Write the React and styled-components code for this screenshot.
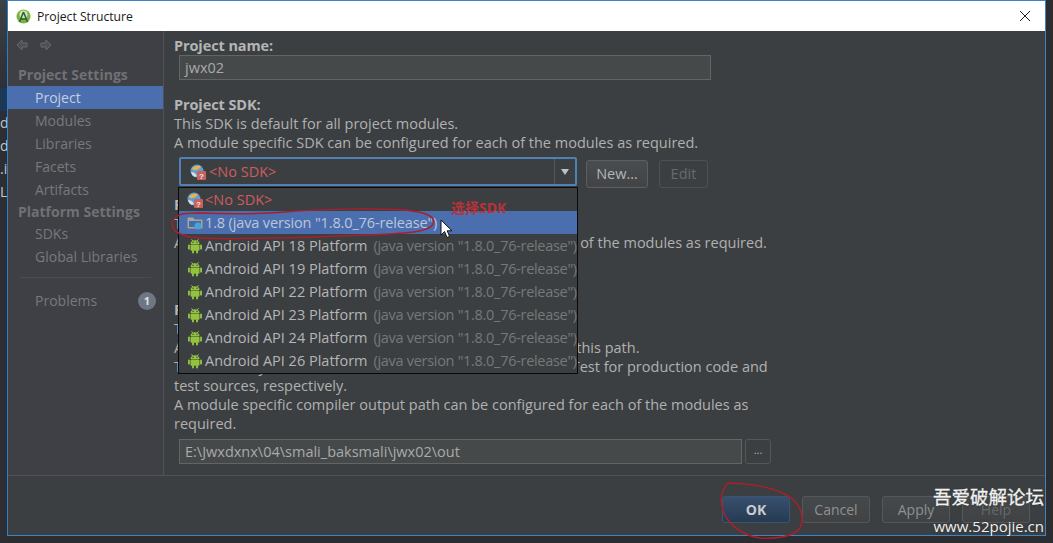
import React from 'react'
import styled, { createGlobalStyle } from 'styled-components'

const GlobalStyle = createGlobalStyle`
  html, body {
    margin: 0;
    padding: 0;
    background: #2b2d30;
  }
`

const Desktop = styled.div`
  position: relative;
  width: 1053px;
  height: 543px;
  overflow: hidden;
  display: flex;
  background: #2b2d30;
  font-family: "Open Sans", "Noto Sans CJK SC", sans-serif;
  font-size: 14px;
`
const BehindColumn = styled.div`
  width: 7px;
  flex: none;
  overflow: hidden;
  display: flex;
  flex-direction: column;
  background: #2c2e33;
`
const BehindTop = styled.div`
  height: 88px;
  flex: none;
  background: linear-gradient(#3c4148, #2d3036);
`
const BehindSelected = styled.div`
  height: 23px;
  flex: none;
  background: #1c3858;
`
const BehindRow = styled.div`
  height: 23px;
  flex: none;
  line-height: 23px;
  color: #c4c6c8;
  white-space: nowrap;
`
const Win = styled.div`
  width: 1039px;
  height: 536px;
  flex: none;
  box-sizing: border-box;
  border: 1px solid #3c85c4;
  border-left-color: #2f7fc1;
  display: flex;
  flex-direction: column;
  background: #3c3f41;
  color: #b0b1b2;
`
const TitleBar = styled.div`
  height: 30px;
  flex: none;
  display: flex;
  align-items: center;
  gap: 6px;
  padding: 0 14px 0 8px;
  background: #fff;
  color: #1a1a1a;
`
const TitleText = styled.span`
  flex: 1;
  font-size: 12.2px;
`
const CloseButton = styled.div`
  width: 12px;
  height: 12px;
  display: flex;
`
const Main = styled.div`
  flex: 1;
  display: flex;
  min-height: 0;
`
const Sidebar = styled.div`
  width: 156px;
  flex: none;
  box-sizing: border-box;
  border-right: 1px solid #505355;
  background: #3e4045;
  display: flex;
  flex-direction: column;
  color: #77797c;
`
const NavArrows = styled.div`
  height: 32px;
  padding: 0 0 4px 8px;
  box-sizing: border-box;
  display: flex;
  align-items: center;
  gap: 12px;
`
const GroupTitle = styled.div`
  height: ${p => p.$h || 23}px;
  line-height: ${p => p.$h || 23}px;
  padding-left: 10px;
  font-weight: 700;
  color: #6f7174;
`
const SideItem = styled.div`
  height: 23px;
  line-height: 23px;
  padding-left: 27px;
  display: flex;
  align-items: center;
  justify-content: space-between;
  color: ${p => (p.$active ? '#c5cede' : '#77797c')};
  background: ${p => (p.$active ? '#4b6eaf' : 'transparent')};
`
const SideDivider = styled.div`
  height: 1px;
  margin: 9px 12px 11px;
  background: #4a4c4f;
`
const Badge = styled.span`
  width: 18px;
  height: 18px;
  margin-right: 7px;
  border-radius: 50%;
  background: #6d7785;
  color: #dfe1e4;
  font-size: 11px;
  font-weight: 700;
  line-height: 18px;
  text-align: center;
`
const Content = styled.div`
  flex: 1;
  position: relative;
  padding: 5px 10px 0;
  display: flex;
  flex-direction: column;
  font-size: 14.5px;
`
const Label = styled.div`
  font-weight: 700;
  line-height: 19px;
  margin-top: ${p => p.$top || 0}px;
  color: #b4b5b6;
  letter-spacing: -0.1px;
`
const TextLine = styled.div`
  line-height: 19px;
  white-space: nowrap;
`
const FieldRow = styled.div`
  display: flex;
  gap: 3px;
  margin: ${p => p.$top || 0}px 0 0 5px;
`
const TextField = styled.div`
  width: ${p => p.$w}px;
  height: 25px;
  box-sizing: border-box;
  border: 1px solid #646464;
  background: #45494a;
  padding-left: 5px;
  line-height: 23px;
  color: #a9aaab;
`
const SmallButton = styled.div`
  width: 26px;
  height: 25px;
  box-sizing: border-box;
  border: 1px solid #555759;
  border-radius: 3px;
  text-align: center;
  line-height: 20px;
  font-size: 11px;
`
const ComboRow = styled.div`
  display: flex;
  align-items: flex-start;
  margin: 5px 0 0 5px;
`
const Combo = styled.div`
  width: 398px;
  height: 29px;
  box-sizing: border-box;
  border: 2px solid #4f81b5;
  border-radius: 2px;
  display: flex;
  align-items: center;
  background: #3c3f41;
  margin-right: 9px;
`
const ComboValue = styled.div`
  flex: 1;
  display: flex;
  align-items: center;
  gap: 3px;
  padding-left: 9px;
  color: #cf5b5f;
`
const ComboArrow = styled.div`
  width: 20px;
  height: 25px;
  border-left: 1px solid #55585a;
  display: flex;
  align-items: center;
  justify-content: center;
  &::after {
    content: '';
    border-left: 4px solid transparent;
    border-right: 4px solid transparent;
    border-top: 6px solid #bfc1c3;
  }
`
const PushButton = styled.div`
  width: ${p => p.$w}px;
  height: 28px;
  box-sizing: border-box;
  margin: 3px 0 0 ${p => p.$left || 0}px;
  border: 1px solid ${p => (p.$off ? '#4e5052' : '#5c5f61')};
  border-radius: 3px;
  background: ${p => (p.$off ? 'transparent' : 'linear-gradient(#4a4d4f, #414345)')};
  color: ${p => (p.$off ? '#686a6c' : '#b4b5b6')};
  line-height: 26px;
  text-align: center;
`
const Popup = styled.div`
  position: absolute;
  left: 14px;
  top: 156px;
  width: 400px;
  height: 187px;
  box-sizing: border-box;
  border: 1px solid #0a0a0a;
  background: #3c3f41;
  overflow: hidden;
`
const PopupRow = styled.div`
  height: 23px;
  display: flex;
  align-items: center;
  gap: 2px;
  padding-left: 8px;
  white-space: nowrap;
  color: #b4b5b6;
  background: ${p => (p.$selected ? '#4b6eaf' : 'transparent')};
`
const RedText = styled.span`
  color: #cf5b5f;
`
const PopupVersion = styled.span`
  color: #76787a;
  margin-left: 4px;
  letter-spacing: -0.3px;
`
const SelectedText = styled.span`
  color: #bcc6d8;
  letter-spacing: -0.14px;
`
const Footer = styled.div`
  height: 60px;
  flex: none;
  border-top: 1px solid #505355;
  display: flex;
  justify-content: flex-end;
  gap: 12px;
  padding: 20px 15px 0 0;
  box-sizing: border-box;
  background: #3c3f41;
`
const DialogButton = styled.div`
  width: 68px;
  height: 27px;
  box-sizing: border-box;
  border: 1px solid ${p => (p.$primary ? '#3a5570' : '#55585a')};
  border-radius: 3px;
  background: ${p => (p.$primary ? 'linear-gradient(#38506e, #263a52)' : 'linear-gradient(#46494b, #404244)')};
  color: ${p => (p.$primary ? '#c9ccd0' : p.$dim ? '#66686a' : '#8f9193')};
  font-weight: ${p => (p.$primary ? 700 : 400)};
  line-height: 25px;
  text-align: center;
`
const Scribbles = styled.svg`
  position: absolute;
  left: 0;
  top: 0;
  pointer-events: none;
`
const Callout = styled.div`
  position: absolute;
  left: 451px;
  top: 199px;
  color: #b8323a;
  font-size: 14px;
  font-weight: 700;
  line-height: 17px;
`
const Cursor = styled.svg`
  position: absolute;
  left: 440px;
  top: 219px;
`
const Watermark = styled.div`
  position: absolute;
  right: 9px;
  bottom: 6px;
  color: #f1f1f1;
  text-align: right;
  text-shadow: 0 0 2px #2a2a2a;
`
const WatermarkTitle = styled.div`
  font-size: 18.5px;
  line-height: 24px;
  margin-bottom: 6px;
  -webkit-text-stroke: 0.3px #f1f1f1;
`
const WatermarkUrl = styled.div`
  font-size: 15px;
  line-height: 22px;
`

const StudioIcon = () => (
  <svg width="15" height="15" viewBox="0 0 15 15">
    <circle cx="7.5" cy="7.5" r="7" fill="#7cb342" />
    <circle cx="7.5" cy="5.5" r="4" fill="#d3e6b5" />
    <path d="M7.5 3 L3.5 13 M7.5 3 L11.5 13 M4.5 10 H10.5" stroke="#2f5d3a" strokeWidth="1.5" fill="none" />
  </svg>
)

const CloseIcon = () => (
  <svg width="12" height="12" viewBox="0 0 12 12">
    <path d="M1 1 L11 11 M11 1 L1 11" stroke="#222" strokeWidth="1" />
  </svg>
)

const NavArrow = ({ flip }) => (
  <svg width="12" height="12" viewBox="0 0 12 12" style={flip ? { transform: 'scaleX(-1)' } : undefined}>
    <path d="M6 1 L1 6 L6 11 V8 H11 V4 H6 Z" fill="#4d5053" stroke="#66696c" strokeWidth="1" />
  </svg>
)

const NoSdkIcon = () => (
  <svg width="16" height="16" viewBox="0 0 16 16">
    <circle cx="7" cy="7" r="6.5" fill="#5f9fd6" />
    <path d="M2 4 Q6 1 11 2 Q9 6 5 6 Q3 7 2 4 Z" fill="#e6b450" />
    <path d="M1 8 Q5 8 7 12 L5 13 Q2 12 1 8 Z" fill="#d8dde2" />
    <rect x="7" y="7" width="9" height="9" rx="1" fill="#c7615a" />
    <text x="11.5" y="14.5" fontSize="8" fontWeight="700" fill="#f3e6e4" textAnchor="middle" fontFamily="Liberation Sans, sans-serif">?</text>
  </svg>
)

const FolderIcon = () => (
  <svg width="16" height="16" viewBox="0 0 16 16">
    <path d="M1 3 H6 L7.5 5 H15 V13 H1 Z" fill="#8fa8c8" stroke="#c7a15a" strokeWidth="1" />
    <rect x="2" y="6" width="12" height="6" fill="#3f6ea8" />
    <circle cx="11" cy="11" r="3.5" fill="#4aa3df" />
  </svg>
)

const AndroidIcon = () => (
  <svg width="16" height="16" viewBox="0 0 16 16">
    <path d="M4.5 1.2 L5.8 3 M11.5 1.2 L10.2 3" stroke="#93c23f" strokeWidth="1" />
    <path d="M3.5 6 Q3.7 2.3 8 2.3 Q12.3 2.3 12.5 6 Z" fill="#93c23f" />
    <circle cx="6" cy="4.3" r="0.7" fill="#3c3f41" />
    <circle cx="10" cy="4.3" r="0.7" fill="#3c3f41" />
    <rect x="3.5" y="6.6" width="9" height="6.2" rx="1" fill="#93c23f" />
    <rect x="1" y="6.6" width="1.9" height="5" rx="0.9" fill="#93c23f" />
    <rect x="13.1" y="6.6" width="1.9" height="5" rx="0.9" fill="#93c23f" />
    <rect x="5" y="12" width="2" height="3.4" rx="1" fill="#93c23f" />
    <rect x="9" y="12" width="2" height="3.4" rx="1" fill="#93c23f" />
  </svg>
)

const platforms = [18, 19, 22, 23, 24, 26]

const App = () => {
  return (
    <Desktop>
      <GlobalStyle />
      <BehindColumn>
        <BehindTop />
        <BehindSelected />
        <BehindRow>d</BehindRow>
        <BehindRow>de</BehindRow>
        <BehindRow>.i</BehindRow>
        <BehindRow>L</BehindRow>
      </BehindColumn>

      <Win>
        <TitleBar>
          <StudioIcon />
          <TitleText>Project Structure</TitleText>
          <CloseButton><CloseIcon /></CloseButton>
        </TitleBar>
        <Main>
          <Sidebar>
            <NavArrows>
              <NavArrow />
              <NavArrow flip />
            </NavArrows>
            <GroupTitle>Project Settings</GroupTitle>
            <SideItem $active>Project</SideItem>
            <SideItem>Modules</SideItem>
            <SideItem>Libraries</SideItem>
            <SideItem>Facets</SideItem>
            <SideItem>Artifacts</SideItem>
            <GroupTitle $h={21}>Platform Settings</GroupTitle>
            <SideItem>SDKs</SideItem>
            <SideItem>Global Libraries</SideItem>
            <SideDivider />
            <SideItem>Problems<Badge>1</Badge></SideItem>
          </Sidebar>
          <Content>
            <Label>Project name:</Label>
            <FieldRow><TextField $w={532}>jwx02</TextField></FieldRow>
            <Label $top={15}>Project SDK:</Label>
            <TextLine>This SDK is default for all project modules.</TextLine>
            <TextLine>A module specific SDK can be configured for each of the modules as required.</TextLine>
            <ComboRow>
              <Combo>
                <ComboValue><NoSdkIcon />&lt;No SDK&gt;</ComboValue>
                <ComboArrow />
              </Combo>
              <PushButton $w={62}>New...</PushButton>
              <PushButton $w={49} $left={11} $off>Edit</PushButton>
            </ComboRow>
            <Label $top={7}>Project language level:</Label>
            <TextLine>This language level is default for all project modules.</TextLine>
            <TextLine>A module specific language level can be configured for each of the modules as required.</TextLine>
            <Label $top={48}>Project compiler output:</Label>
            <TextLine>This path is used to store all project compilation results.</TextLine>
            <TextLine>A directory corresponding to each module is created under this path.</TextLine>
            <TextLine>This directory contains two subdirectories: Production and Test for production code and</TextLine>
            <TextLine>test sources, respectively.</TextLine>
            <TextLine>A module specific compiler output path can be configured for each of the modules as</TextLine>
            <TextLine>required.</TextLine>
            <FieldRow $top={6}>
              <TextField $w={563}>E:\Jwxdxnx\04\smali_baksmali\jwx02\out</TextField>
              <SmallButton>...</SmallButton>
            </FieldRow>

            <Popup>
              <PopupRow><NoSdkIcon /><RedText>&lt;No SDK&gt;</RedText></PopupRow>
              <PopupRow $selected><FolderIcon /><SelectedText>1.8 (java version "1.8.0_76-release")</SelectedText></PopupRow>
              {platforms.map(level => (
                <PopupRow key={level}>
                  <AndroidIcon />
                  Android API {level} Platform
                  <PopupVersion>(java version "1.8.0_76-release")</PopupVersion>
                </PopupRow>
              ))}
            </Popup>
          </Content>
        </Main>
        <Footer>
          <DialogButton $primary>OK</DialogButton>
          <DialogButton>Cancel</DialogButton>
          <DialogButton>Apply</DialogButton>
          <DialogButton $dim>Help</DialogButton>
        </Footer>
      </Win>

      <Scribbles width="1053" height="543" viewBox="0 0 1053 543" fill="none">
        <path d="M172 222 C176 214 182 213 200 213 C230 214 260 214 285 212 C320 209 370 208 405 210 C425 212 436 216 433 224 C430 232 410 233 370 235 C330 236 300 238 265 238 C235 239 205 239 190 237 C178 235 171 229 172 222 Z" stroke="#a8202c" strokeWidth="1.5" />
        <path d="M728 483 C745 483 772 486 790 497 C801 505 805 518 800 528 C794 537 775 539 760 538 C745 536 732 527 726 517 C720 506 719 492 728 483 Z" stroke="#a8202c" strokeWidth="1.5" />
      </Scribbles>
      <Callout>选择SDK</Callout>
      <Cursor width="14" height="20" viewBox="0 0 14 20">
        <path d="M1 1 V16 L4.6 12.6 L7 18.5 L9.6 17.4 L7.2 11.8 H12 Z" fill="#fff" stroke="#111" strokeWidth="1" />
      </Cursor>
      <Watermark>
        <WatermarkTitle>吾爱破解论坛</WatermarkTitle>
        <WatermarkUrl>www.52pojie.cn</WatermarkUrl>
      </Watermark>
    </Desktop>
  )
}

export default App
